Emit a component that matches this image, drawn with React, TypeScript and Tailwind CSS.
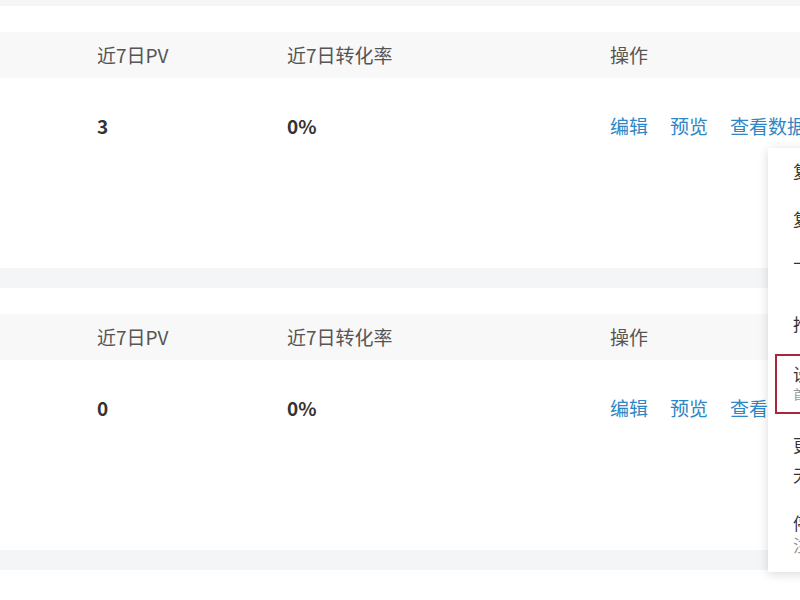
import React from "react"

const rows = [
  { pv: "3", rate: "0%" },
  { pv: "0", rate: "0%" },
]

function Card({ pv, rate }: { pv: string; rate: string }) {
  return (
    <div className="bg-white pt-[26px]">
      {/* header */}
      <div className="flex h-[46px] items-center bg-[#f8f8f9] pl-[97px] text-[19px] text-[#555]">
        <div className="w-[190px] shrink-0">近7日PV</div>
        <div className="w-[323px] shrink-0">近7日转化率</div>
        <div className="shrink-0">操作</div>
      </div>
      {/* body */}
      <div className="h-[190px] pl-[97px] pt-[34px]">
        <div className="flex items-center text-[19px]">
          <div className="w-[190px] shrink-0 font-bold text-[#333]">{pv}</div>
          <div className="w-[323px] shrink-0 font-bold text-[#333]">{rate}</div>
          <div className="flex shrink-0 gap-[22px] whitespace-nowrap text-[#2f86c4]">
            <span>编辑</span>
            <span>预览</span>
            <span>查看数据</span>
          </div>
        </div>
      </div>
    </div>
  )
}

export default function App() {
  return (
    <div
      className="relative h-[600px] w-[800px] overflow-hidden bg-[#f4f5f7]"
      style={{ fontFamily: '"Noto Sans CJK SC", "Noto Sans", sans-serif' }}
    >
      <div className="h-[6px]" />
      <div className="flex flex-col gap-[20px]">
        {rows.map((r, i) => (
          <Card key={i} pv={r.pv} rate={r.rate} />
        ))}
        <div className="h-[40px] bg-white" />
      </div>

      {/* dropdown menu */}
      <div className="absolute left-[768px] top-[148px] h-[424px] w-[190px] whitespace-nowrap bg-white text-[17px] text-[#333] shadow-[0_2px_10px_rgba(0,0,0,0.15)]">
        <div className="flex h-[46px] items-center pl-[25px]">复制</div>
        <div className="flex h-[50px] items-center pl-[25px]">复制链接</div>
        <div className="flex h-[50px] items-center pl-[25px]">下载二维码</div>
        <div className="flex h-[60px] items-center pl-[25px]">推广</div>
        <div className="ml-[7px] flex h-[60px] flex-col justify-center border-2 border-r-0 border-[#a8283b] pl-[16px] leading-[20px]">
          <span>设为首页</span>
          <span className="text-[13px] text-[#999]">首页展示</span>
        </div>
        <div className="flex h-[92px] flex-col justify-center pl-[25px] leading-[30px]">
          <span>更换模板</span>
          <span>无需重新编辑</span>
        </div>
        <div className="flex flex-col pl-[25px] pt-[6px] leading-[22px]">
          <span>停用</span>
          <span className="text-[#999]">注意停用后不可访问</span>
        </div>
      </div>
    </div>
  )
}
